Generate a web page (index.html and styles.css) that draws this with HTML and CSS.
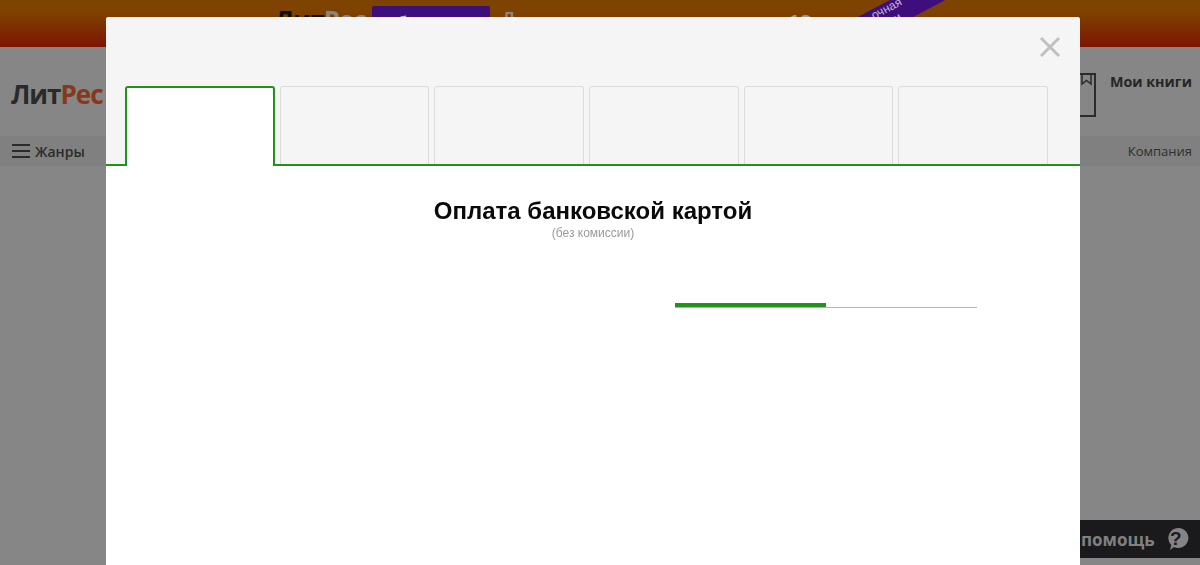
FILE: index.html
```html
<!DOCTYPE html>
<html lang="ru">
<head>
<meta charset="utf-8">
<title>ЛитРес</title>
<link rel="stylesheet" href="styles.css">
</head>
<body>
<div class="page">
  <div class="banner">
    <div class="banner-brand"><span class="b-lit">Лит</span><span class="b-res">Рес</span></div>
    <div class="banner-tag">абонемент</div>
    <div class="banner-arrow">Л</div>
    <div class="banner-num">18</div>
    <div class="ribbon"><div class="ribbon-text"><span>очная</span><span>ски</span></div></div>
  </div>
  <header class="head">
    <div class="logo"><span class="logo-lit">Лит</span><span class="logo-res">Рес</span></div>
    <div class="mybooks">
      <svg class="book-icon" width="16" height="44" viewBox="0 0 16 44"><path d="M0 1H15V43H0" fill="none" stroke="#2b2b2b" stroke-width="2"/><path d="M2 2V11L6.500 7.500L11 11V2" fill="none" stroke="#2b2b2b" stroke-width="1.500"/></svg>
      <span class="mybooks-label">Мои книги</span>
    </div>
  </header>
  <nav class="nav">
    <div class="genres">
      <span class="burger"><i></i><i></i><i></i></span>
      <span>Жанры</span>
    </div>
    <div class="company">Компания</div>
  </nav>
</div>

<div class="help">
  <span class="help-text">помощь</span>
  <svg width="21" height="23" viewBox="0 0 21 23"><path d="M10.500 0A10 10 0 1 1 6 19L2 22L3.300 17A10 10 0 0 1 10.500 0Z" fill="#848484"/></svg>
  <span class="help-q">?</span>
</div>

<main class="modal">
  <button class="close" aria-label="Закрыть">
    <svg width="22" height="22" viewBox="0 0 22 22"><path d="M2 2L20 20M20 2L2 20" stroke="#c0c0c0" stroke-width="3" fill="none"/></svg>
  </button>
  <div class="tabs">
    <div class="tab tab-active"></div>
    <div class="tab"></div>
    <div class="tab"></div>
    <div class="tab"></div>
    <div class="tab"></div>
    <div class="tab"></div>
  </div>
  <section class="content">
    <h1 class="title">Оплата банковской картой</h1>
    <p class="subtitle">(без комиссии)</p>
    <div class="progress"><div class="progress-fill"></div></div>
  </section>
</main>
</body>
</html>
```
FILE: styles.css
```css
* { box-sizing: border-box; }
html, body { margin: 0; padding: 0; height: 100%; overflow: hidden; }
body {
  background: #868686;
  font-family: "Liberation Sans", Arial, sans-serif;
  color: #2b2b2b;
}
.page { height: 565px; overflow: hidden; }
.banner {
  height: 47px;
  position: relative;
  overflow: hidden;
  background: linear-gradient(180deg, #7e4300 0%, #7e4300 25%, #7d1500 100%);
}
.banner-brand { position: absolute; left: 275px; top: 2px; font: bold 25px "Open Sans", sans-serif; letter-spacing: -.5px; }
.b-lit { color: #0e0e0e; }
.b-res { color: #868686; }
.banner-tag {
  position: absolute; left: 372px; top: 6px; width: 118px; height: 24px;
  padding-top: 7px;
  background: #3d0e7c; color: #c0b8cc; font: bold 16px/20px "Liberation Sans", sans-serif;
  text-align: center; border-radius: 2px;
}
.banner-arrow { position: absolute; left: 503px; top: 10px; color: #868686; font-size: 16px; font-weight: bold; }
.banner-num { position: absolute; left: 789px; top: 11px; color: #989898; font: bold 20px "Liberation Sans", sans-serif; }
.ribbon {
  position: absolute; left: 851px; top: -9px; width: 120px; height: 26px;
  background: #3d0e7c; transform: rotate(-28deg); transform-origin: 60px 17px;
  color: #c0b8cc; font-size: 12px; line-height: 13px;
}
.ribbon-text { width: 76px; display: flex; flex-direction: column; align-items: center; }
.head {
  height: 89px;
  display: flex;
  justify-content: space-between;
  padding: 26px 8px 0 11px;
}
.logo { font: 700 26px/42px "Open Sans", sans-serif; letter-spacing: -1px; }
.logo-lit { color: #2a2a2a; }
.logo-res { color: #85391a; }
.mybooks { display: flex; align-items: flex-start; gap: 14px; }
.mybooks-label { font: bold 14.300px/18px "Open Sans", "Liberation Sans", sans-serif; color: #262626; }
.nav {
  height: 30px;
  background: #808080;
  display: flex;
  justify-content: space-between;
  align-items: center;
  padding: 0 8px 0 12px;
  font-size: 14px;
}
.genres { display: flex; align-items: center; gap: 5px; font: 600 14px "Open Sans", sans-serif; color: #2b2b2b; }
.burger { display: flex; flex-direction: column; gap: 4px; width: 18px; }
.burger i { display: block; height: 2px; background: #2b2b2b; }
.company { font: 400 13px "Open Sans", sans-serif; color: #2f2f2f; }

.help {
  position: fixed; left: 1060px; top: 520px; width: 140px; height: 38px;
  background: #1a1a1c;
  display: flex; align-items: center; gap: 13px; padding-left: 21px;
}
.help-text { font: bold 17px "Open Sans", "Liberation Sans", sans-serif; color: #808080; }
.help-q { position: absolute; left: 110px; top: 8px; font: bold 19px "Liberation Sans", sans-serif; color: #1a1a1c; }

.modal {
  position: fixed; left: 106px; top: 17px; width: 974px; height: 560px;
  background: #fff;
  border-radius: 3px 3px 0 0;
  overflow: hidden;
}
.close {
  position: absolute; left: 933px; top: 19px; width: 22px; height: 22px;
  padding: 0; border: 0; background: none; display: block;
}
.close svg { display: block; }
.tabs {
  height: 149px;
  background: #f5f5f5;
  border-bottom: 2px solid #1f931a;
  padding: 69px 32px 0 19px;
  display: flex;
  justify-content: space-between;
  align-items: flex-end;
}
.tab {
  width: 149.600px;
  height: 78px;
  border: 1px solid #dcdcdc;
  border-bottom: 0;
  border-radius: 3px 3px 0 0;
  background: #f5f5f5;
}
.tab-active {
  height: 80px;
  margin-bottom: -2px;
  background: #fff;
  border: 2px solid #1f931a;
  border-bottom: 0;
  position: relative;
}
.content { display: flex; flex-direction: column; align-items: center; padding-top: 31px; }
.title { margin: 0; font: bold 24px/28px "Liberation Sans", sans-serif; color: #0a0a0a; }
.subtitle { margin: 1px 0 0; font: 12px/14px "Liberation Sans", sans-serif; color: #9a9a9a; }
.progress {
  align-self: flex-start;
  margin: 63px 0 0 569px;
  width: 302px;
  height: 5px;
  border-bottom: 1px solid #b3b3b3;
}
.progress-fill { width: 151px; height: 4px; background: #1f931a; }
```
